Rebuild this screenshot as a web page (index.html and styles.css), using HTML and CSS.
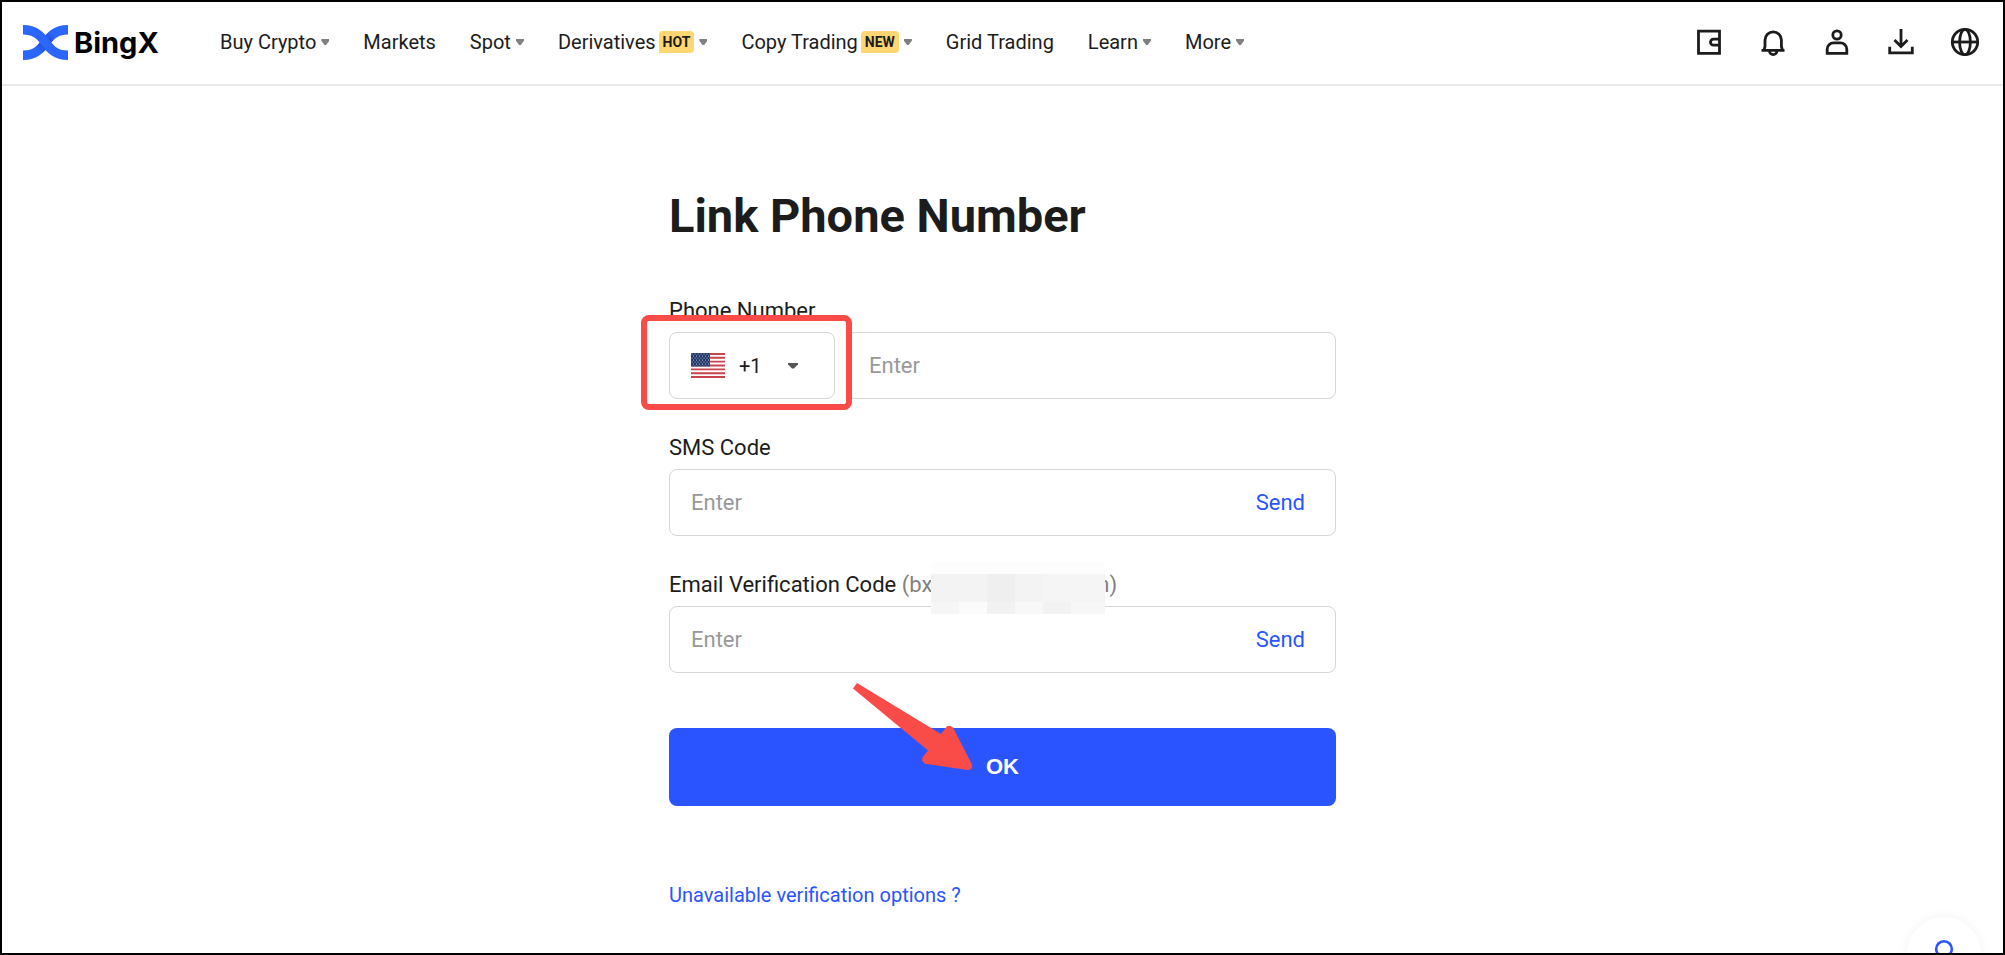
FILE: index.html
```
<!DOCTYPE html>
<html lang="en">
<head>
    <meta charset="UTF-8">
    <meta name="viewport" content="width=device-width, initial-scale=1.0">
    <title>Link Phone Number - BingX</title>
    <link rel="stylesheet" href="styles.css">
</head>
<body>
    <!-- Header -->
    <header class="header">
        <a class="logo" href="#" aria-label="BingX">
            <svg width="45" height="35" viewBox="0 0 45 35">
                <defs>
                    <linearGradient id="fold" x1="0" y1="1" x2="1" y2="0">
                        <stop offset="0.3" stop-color="#2a66ff"/>
                        <stop offset="0.42" stop-color="#2153d6"/>
                        <stop offset="0.58" stop-color="#2153d6"/>
                        <stop offset="0.7" stop-color="#2a66ff"/>
                    </linearGradient>
                </defs>
                <path d="M45 0v9.500C36 9.500 32 13 28 18C21 28 14 35 0 35V25.500C9 25.500 13 22 17 17C24 7 31 0 45 0z" fill="url(#fold)"/>
                <path d="M0 0v9.500C9 9.500 13 13 17 18C24 28 31 35 45 35V25.500C36 25.500 32 22 28 17C21 7 14 0 0 0z" fill="#2a66ff"/>
            </svg>
            <span>BingX</span>
        </a>
        <nav class="nav">
            <button type="button">Buy Crypto<i class="caret"></i></button>
            <a href="#">Markets</a>
            <button type="button">Spot<i class="caret"></i></button>
            <button type="button">Derivatives<span class="tag">HOT</span><i class="caret"></i></button>
            <button type="button">Copy Trading<span class="tag">NEW</span><i class="caret"></i></button>
            <a href="#">Grid Trading</a>
            <button type="button">Learn<i class="caret"></i></button>
            <button type="button">More<i class="caret"></i></button>
        </nav>
        <div class="tools">
            <button type="button" aria-label="Wallet">
                <svg viewBox="0 0 32 32"><path d="M5.500 5.200h21v22.200h-21z"/><path d="M26 13.200h-5.500a3 3 0 0 0 0 6H26"/></svg>
            </button>
            <button type="button" aria-label="Notifications">
                <svg viewBox="0 0 32 32"><path d="M4.500 24.300h23M7 24l1-3.500V14a8.200 8.200 0 0 1 16.400 0v6.500l1 3.500M12.500 25a3.700 3.700 0 0 0 7.400 0"/></svg>
            </button>
            <button type="button" aria-label="Account">
                <svg viewBox="0 0 32 32"><circle cx="16" cy="9" r="4.200"/><path d="M6.200 27.400v-4.200a6.400 6.400 0 0 1 6.400-6.400h6.800a6.400 6.400 0 0 1 6.400 6.400v4.200z"/></svg>
            </button>
            <button type="button" aria-label="Download">
                <svg viewBox="0 0 32 32"><path d="M16 3v17M9.500 14l6.500 6.500 6.500-6.500M4.700 20.800v6h22.600v-6"/></svg>
            </button>
            <button type="button" aria-label="Language">
                <svg viewBox="0 0 32 32"><circle cx="16" cy="16" r="12.700"/><ellipse cx="16" cy="16" rx="5.400" ry="12.700"/><path d="M3.300 16h25.400"/></svg>
            </button>
        </div>
    </header>

    <!-- Link phone form -->
    <main>
        <form class="form" onsubmit="return false">
            <h1>Link Phone Number</h1>

            <div class="field">
                <label for="phone">Phone Number</label>
                <div class="phone-row">
                    <div class="box country">
                        <svg class="flag" width="34" height="25" viewBox="0 0 34 25">
                            <defs>
                                <pattern id="stars" width="3" height="4" patternUnits="userSpaceOnUse">
                                    <circle cx="1" cy="1" r="0.500" fill="#fff"/>
                                    <circle cx="2.500" cy="3" r="0.500" fill="#fff"/>
                                </pattern>
                            </defs>
                            <path d="M0 0h34v25H0z" fill="#fff"/>
                            <path d="M0 .96h34M0 4.800h34M0 8.650h34M0 12.500h34M0 16.350h34M0 20.200h34M0 24.040h34" stroke="#c9434f" stroke-width="1.920"/>
                            <path d="M0 0h19v13.460H0z" fill="#1f3468"/>
                            <path d="M0 0h19v13.460H0z" fill="url(#stars)"/>
                        </svg>
                        <select aria-label="Country code">
                            <option>+1</option>
                        </select>
                        <i class="caret"></i>
                        <div class="highlight"></div>
                    </div>
                    <div class="box">
                        <input type="tel" id="phone" placeholder="Enter">
                    </div>
                </div>
            </div>

            <div class="field">
                <label for="sms">SMS Code</label>
                <div class="box">
                    <input type="text" id="sms" placeholder="Enter">
                    <button type="button" class="send">Send</button>
                </div>
            </div>

            <div class="field">
                <label for="email">Email Verification Code <span class="address">(bx<span class="mosaic"></span>n)</span></label>
                <div class="box">
                    <input type="text" id="email" placeholder="Enter">
                    <button type="button" class="send">Send</button>
                </div>
            </div>

            <div class="submit">
                <button type="submit">OK</button>
                <svg class="arrow" width="126" height="92" viewBox="0 0 126 92">
                    <path d="M3 7.500L7 2l84 51l4.500-6c2-3 6-3 8 .5l18 35c2 4-.5 7-4 6.500l-41-6c-4-.5-5.500-4.500-3.500-7.500l5-6z" fill="#f94b47"/>
                </svg>
            </div>

            <a class="help" href="#">Unavailable verification options ?</a>
        </form>
    </main>

    <button type="button" class="support" aria-label="Support">
        <svg width="20" height="30" viewBox="0 0 20 30"><circle cx="10" cy="10" r="7.800"/></svg>
    </button>
</body>
</html>
```
FILE: styles.css
```
* {
    box-sizing: border-box;
}

body {
    position: relative;
    min-height: 100vh;
    margin: 0;
    border: 2px solid #000;
    overflow: hidden;
    font-family: Roboto, "Open Sans", sans-serif;
    font-size: 22px;
    color: #1c1c1c;
    background: #fff;
}

button,
input,
select {
    padding: 0;
    border: none;
    outline: none;
    background: none;
    font: inherit;
    color: inherit;
}

button {
    cursor: pointer;
}

a {
    color: inherit;
    text-decoration: none;
}

/* Header */
.header {
    display: flex;
    align-items: center;
    height: 84px;
    padding: 0 22px 2px 21px;
    border-bottom: 2px solid #eaeaea;
}

.logo {
    display: flex;
    align-items: center;
    gap: 6px;
    width: 137px;
    font-family: Inter, sans-serif;
    font-size: 29px;
    font-weight: 700;
    color: #000;
}

.nav {
    display: flex;
    align-items: center;
    gap: 34px;
    margin-left: 60px;
    font-size: 20px;
}

.nav button,
.nav a {
    display: flex;
    align-items: center;
    line-height: 24px;
    white-space: nowrap;
}

.caret {
    width: 8px;
    height: 6px;
    margin-left: 5px;
    background: #808080;
    clip-path: polygon(0 0, 100% 0, 100% 30%, 60% 100%, 40% 100%, 0 30%);
}

.tag {
    height: 22px;
    padding: 0 4px;
    margin-left: 3px;
    border-radius: 4px 4px 4px 0;
    background: #ffd671;
    font-size: 14px;
    font-weight: 700;
    line-height: 22px;
}

.tools {
    display: flex;
    gap: 32px;
    margin-left: auto;
}

.tools button {
    width: 32px;
    height: 32px;
}

.tools svg {
    display: block;
    fill: none;
    stroke: #1c1c1c;
    stroke-width: 2.8;
}

/* Form */
.form {
    width: 667px;
    max-width: 100%;
    margin: 0 auto;
    padding: 100px 0 40px;
}

h1 {
    margin: 0 0 50px;
    font-size: 47px;
    font-weight: 700;
    line-height: 60px;
}

.field {
    margin-bottom: 34px;
}

.field label {
    display: block;
    margin-bottom: 6px;
    line-height: 30px;
}

.phone-row {
    display: flex;
    gap: 12px;
}

.box {
    display: flex;
    flex: 1;
    align-items: center;
    height: 67px;
    padding: 0 30px 0 21px;
    border: 1px solid #d6d6d6;
    border-radius: 8px;
}

.box input {
    flex: 1;
    min-width: 0;
}

.box input::placeholder {
    color: #999;
    opacity: 1;
}

.country {
    position: relative;
    flex: 0 0 166px;
    font-size: 20px;
}

.country select {
    width: 44px;
    margin-left: 14px;
    appearance: none;
}

.country .caret {
    width: 10px;
    background: #555;
}

/* red frame around the country code */
.highlight {
    position: absolute;
    inset: -18px -18px -12px -29px;
    border: 6px solid #f94b47;
    border-radius: 8px;
    pointer-events: none;
}

.send {
    color: #2a54ff;
}

.address {
    color: #808080;
}

/* blurred out part of the address */
.mosaic {
    position: relative;
    display: inline-block;
    width: 165px;
}

.mosaic::before {
    content: "";
    position: absolute;
    bottom: -22px;
    left: -1px;
    width: 174px;
    height: 52px;
    background:
        linear-gradient(90deg, #f6f6f6 28px, #fbfbfb 28px 56px, #f2f2f2 56px 84px, #f8f8f8 84px 112px, #f2f2f2 112px 140px, #f7f7f7 140px) 0 40px / 100% 12px no-repeat,
        linear-gradient(90deg, #f3f3f3 56px, #efefef 56px 84px, #f3f3f3 84px 112px, #f5f5f5 112px) 0 12px / 100% 28px no-repeat,
        #fdfdfd;
}

.submit {
    position: relative;
    margin-top: 55px;
}

.submit button {
    width: 100%;
    height: 78px;
    border-radius: 8px;
    background: #2a54ff;
    color: #fff;
    font-family: "Liberation Sans", Arial, sans-serif;
    font-weight: 700;
}

.arrow {
    position: absolute;
    top: -47px;
    left: 181px;
    pointer-events: none;
}

.help {
    display: inline-block;
    margin-top: 76px;
    font-size: 20px;
    line-height: 26px;
    color: #2a54ff;
}

/* Floating support button */
.support {
    position: absolute;
    right: 22px;
    bottom: -38px;
    display: flex;
    justify-content: center;
    width: 74px;
    height: 74px;
    padding-top: 22px;
    border-radius: 50%;
    background: #fff;
    box-shadow: 0 0 12px rgba(0, 0, 0, 0.06);
}

.support svg {
    fill: none;
    stroke: #2a54ff;
    stroke-width: 2.6;
}
```
